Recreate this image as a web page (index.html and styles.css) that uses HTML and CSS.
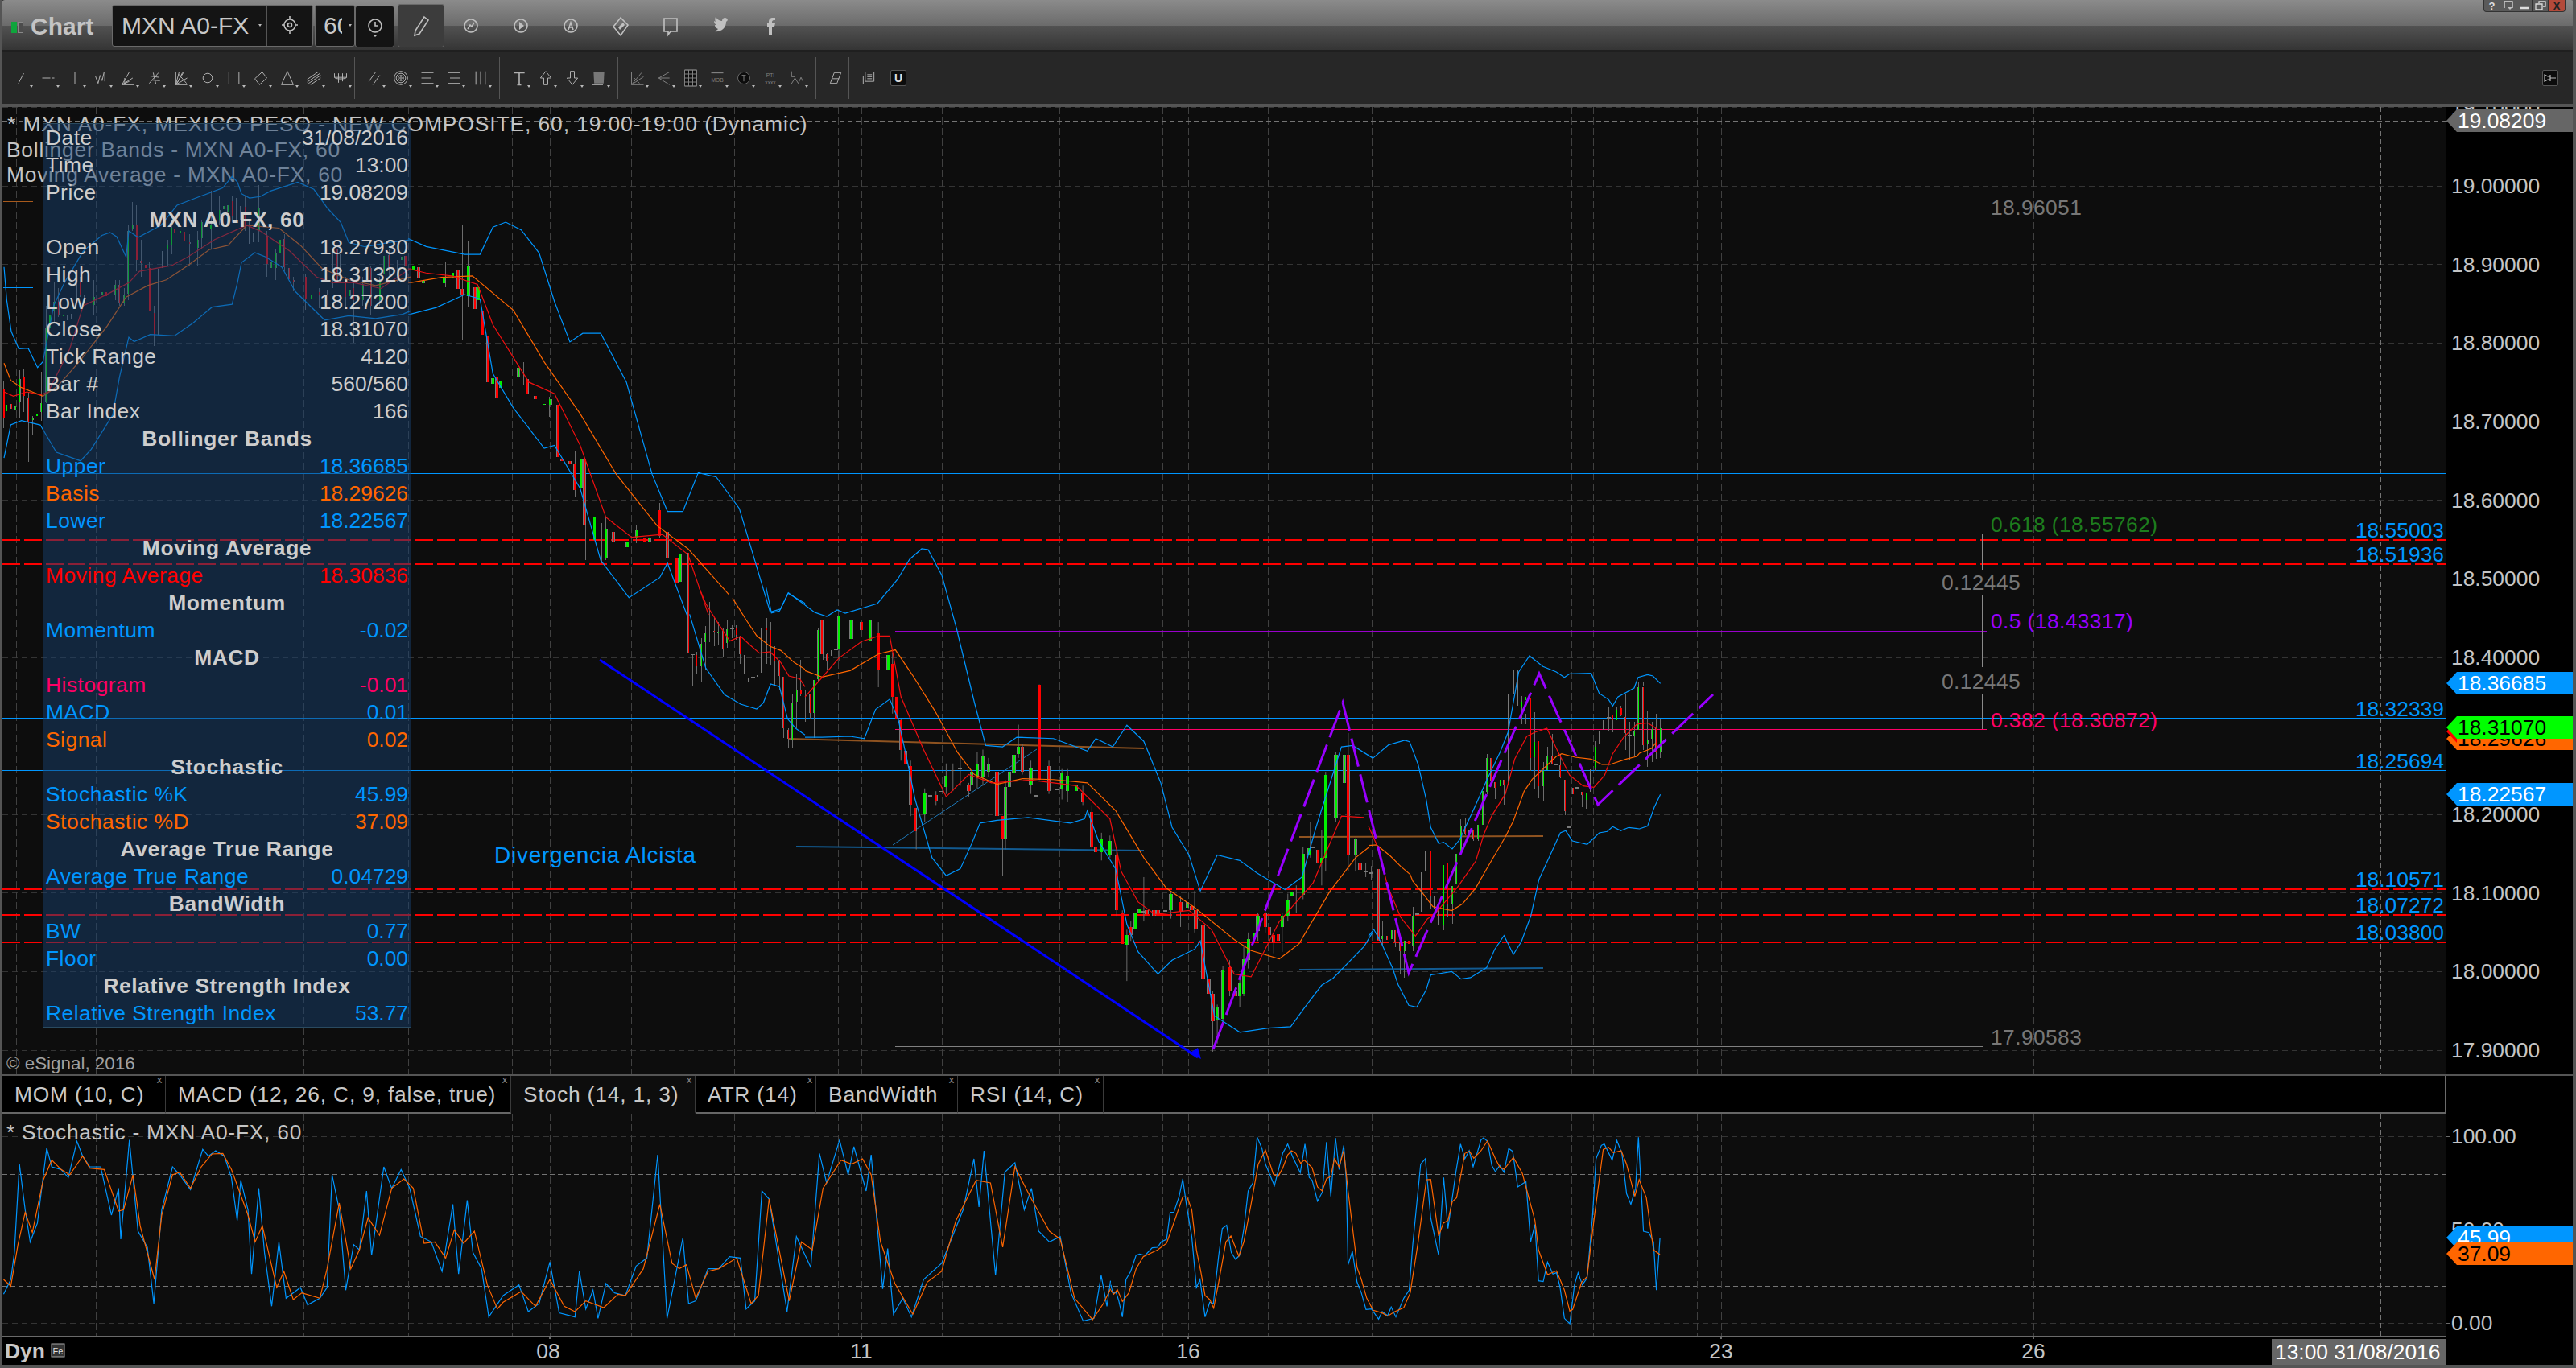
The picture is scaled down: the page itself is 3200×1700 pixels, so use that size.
FILE: index.html
```html
<!DOCTYPE html>
<html lang="en">
<head>
<meta charset="utf-8">
<title>Chart</title>
<link rel="stylesheet" href="styles.css">
</head>
<body>
<div class="window">
  <header class="titlebar">
    <span class="status"><i class="s-green"></i><i class="s-grey"></i></span>
    <span class="app-name">Chart</span>
    <div class="box sym-box"><span class="sym">MXN A0-FX</span><i class="caret caret-w"></i><span class="box-div"><svg class="ti" viewBox="0 0 24 28"><circle cx="12" cy="13" r="7"/><circle cx="12" cy="13" r="2.5"/><path d="M12 2v3M12 21v3M2 13h3M19 13h3"/></svg></span></div>
    <div class="box int-box"><span class="int">60</span><i class="caret caret-w"></i></div>
    <div class="box clock-box"><svg class="ti" viewBox="0 0 24 28"><circle cx="12" cy="13" r="8"/><path d="M12 8v5h4"/><path class="fill" d="M9 24h6l-3 3z"/></svg></div>
    <div class="box pen-box"><svg class="ti" viewBox="0 0 24 28"><path d="M16 3l5 4L10 24l-6 2 1-6z"/></svg></div>
    <span class="tb-icons">
      <svg class="ti" viewBox="0 0 24 28"><circle cx="12" cy="13" r="8"/><path d="M8 17l3-5 2 2 3-5"/></svg>
      <svg class="ti" viewBox="0 0 24 28"><circle cx="12" cy="13" r="8"/><path class="fill" d="M10 8l6 5-6 5z"/></svg>
      <svg class="ti" viewBox="0 0 24 28"><circle cx="12" cy="13" r="8"/><path d="M9 18l3-9 3 9M10 15h4"/></svg>
      <svg class="ti" viewBox="0 0 24 28"><path d="M12 3l9 9-9 13-9-11z"/><path class="fill" d="M9 15l6-6 2 3-6 6z"/></svg>
      <svg class="ti" viewBox="0 0 24 28"><path d="M4 4h16v16h-8l-3 4v-4H4z"/></svg>
      <svg class="ti" viewBox="0 0 24 28"><path class="fill" d="M21 6l-2 2c0 8-6 13-15 12 3-1 4-2 5-3-3-1-4-3-4-5l2 0c-2-1-3-3-3-5l2 1c-1-2-1-4 0-6 2 3 5 5 8 5 0-4 4-5 6-3z"/></svg>
      <svg class="ti" viewBox="0 0 24 28"><path class="fill" d="M14 24V14h3l1-4h-4V8c0-1 1-2 2-2h2V3h-3c-3 0-5 2-5 5v2H8v4h2v10z"/></svg>
    </span>
    <div class="win-controls">
      <span class="wbtn">?</span>
      <span class="wbtn"><svg class="wg" viewBox="0 0 16 12"><path d="M3 9V1h10v8"/><path class="fill" d="M7 8h6l-3 3z"/></svg></span>
      <span class="wbtn"><svg class="wg" viewBox="0 0 16 12"><path class="thick" d="M3 9h10"/></svg></span>
      <span class="wbtn"><svg class="wg" viewBox="0 0 16 12"><path d="M6 3V1h8v6h-3M2 4h8v7H2z"/></svg></span>
      <span class="wbtn wclose">X</span>
    </div>
  </header>

  <nav class="toolbar">
    <div class="tb-group tb-first">
      <span class="tb"><svg viewBox="0 0 24 24"><path d="M7 20L15 5"/></svg><i class="caret"></i></span>
      <span class="tb"><svg viewBox="0 0 24 24"><path d="M3 12h12M18 12h3"/></svg><i class="caret"></i></span>
      <span class="tb"><svg viewBox="0 0 24 24"><path d="M12 3v18"/></svg><i class="caret"></i></span>
      <span class="tb"><svg viewBox="0 0 24 24"><path d="M3 9l4 11 3-12 3 8 3-13M17 3v14"/></svg><i class="caret"></i></span>
      <span class="tb"><svg viewBox="0 0 24 24"><path d="M3 22L14 3M3 22l16-10M3 22h18M7 22V12M3 22l11-5"/></svg><i class="caret"></i></span>
      <span class="tb"><svg viewBox="0 0 24 24"><path d="M4 20L18 4M5 9l14 2M6 15l14 1M10 4l4 17"/></svg><i class="caret"></i></span>
      <span class="tb"><svg viewBox="0 0 24 24"><path d="M4 22L16 3M4 22L9 3M4 22l17-10M4 22h17M4 3v19M8 6l12 14M14 4L6 20"/></svg><i class="caret"></i></span>
      <span class="tb"><svg viewBox="0 0 24 24"><circle cx="12" cy="12" r="7"/></svg><i class="caret"></i></span>
      <span class="tb"><svg viewBox="0 0 24 24"><rect x="4" y="3" width="15" height="18"/></svg><i class="caret"></i></span>
      <span class="tb"><svg viewBox="0 0 24 24"><path d="M14 3l7 9-11 10-7-9z"/></svg><i class="caret"></i></span>
      <span class="tb"><svg viewBox="0 0 24 24"><path d="M12 2l9 20H3z"/></svg><i class="caret"></i></span>
      <span class="tb"><svg viewBox="0 0 24 24"><path d="M2 14L18 3M2 18L21 5M4 20L22 8M7 22L22 12"/></svg><i class="caret"></i></span>
      <span class="tb"><svg viewBox="0 0 24 24"><path d="M3 5v6c0 3 18 3 18 0V5M9 5v14M15 5v12M3 11h18"/></svg><i class="caret"></i></span>
    </div>
    <div class="tb-group">
      <span class="tb"><svg viewBox="0 0 24 24"><path d="M4 17L14 3M10 22L20 8"/></svg><i class="caret"></i></span>
      <span class="tb"><svg viewBox="0 0 24 24"><circle cx="12" cy="12" r="10"/><circle cx="12" cy="12" r="7"/><circle cx="12" cy="12" r="4"/><circle cx="12" cy="12" r="1.5"/></svg><i class="caret"></i></span>
      <span class="tb"><svg viewBox="0 0 24 24"><path d="M3 4h18M3 12h14M3 20h18"/></svg><i class="caret"></i></span>
      <span class="tb"><svg viewBox="0 0 24 24"><path d="M3 4h18M6 12h15M3 20h18"/></svg><i class="caret"></i></span>
      <span class="tb"><svg viewBox="0 0 24 24"><path d="M5 2v20M12 2v20M19 2v20"/></svg><i class="caret"></i></span>
    </div>
    <div class="tb-group">
      <span class="tb"><svg viewBox="0 0 24 24"><path class="thick" d="M4 4h16M12 4v18M9 22h6"/></svg><i class="caret"></i></span>
      <span class="tb"><svg viewBox="0 0 24 24"><path d="M12 2l8 10h-5v10H9V12H4z"/></svg><i class="caret"></i></span>
      <span class="tb"><svg viewBox="0 0 24 24"><path d="M12 22l8-10h-5V2H9v10H4z"/></svg><i class="caret"></i></span>
      <span class="tb"><svg viewBox="0 0 24 24"><path class="fill dim" d="M4 3h16l-1 17H5z"/><path d="M2 22h16"/></svg><i class="caret"></i></span>
    </div>
    <div class="tb-group dimmed">
      <span class="tb"><svg viewBox="0 0 24 24"><path d="M3 3v19h18M3 22L18 4M3 22l18-12M7 12l8 8"/></svg><i class="caret"></i></span>
      <span class="tb"><svg viewBox="0 0 24 24"><path d="M20 3L4 12l16 10M4 12h16"/></svg><i class="caret"></i></span>
      <span class="tb"><svg viewBox="0 0 24 24"><path class="fill blk" d="M3 0h18v24H3z"/><path d="M3 0h18v24H3zM9 0v24M15 0v24M3 6h18M3 12h18M3 18h18"/></svg><i class="caret"></i></span>
      <span class="tb"><svg viewBox="0 0 24 24"><path class="thick" d="M3 4h18"/><text class="mini" x="12" y="18">MOB</text></svg><i class="caret"></i></span>
      <span class="tb"><svg viewBox="0 0 24 24"><circle class="blk" cx="12" cy="12" r="9"/><path d="M9 8h6M12 8v9"/></svg><i class="caret"></i></span>
      <span class="tb"><svg viewBox="0 0 24 24"><text class="mini" x="12" y="11">PTI</text><text class="mini" x="12" y="22">xxxx</text></svg><i class="caret"></i></span>
      <span class="tb"><svg viewBox="0 0 24 24"><path d="M4 2v8h5M3 22l6-10 5 8 4-9 3 6"/></svg><i class="caret"></i></span>
    </div>
    <div class="tb-group tb-single">
      <span class="tb"><svg viewBox="0 0 24 24"><path d="M10 4h10l-6 16H4zM7 13h10"/></svg></span>
    </div>
    <span class="tb tb-notes"><svg viewBox="0 0 24 24"><path d="M7 3h13v14H7zM10 7h7M10 10h7M10 13h7M4 9v12h13"/></svg></span>
    <span class="u-btn">U</span>
    <span class="pin"><svg viewBox="0 0 18 18"><path d="M2 5l4 2h3V5v8-2H6l-4 2zM9 9h7"/></svg></span>
  </nav>

  <section class="pane">
    <svg class="plot" width="3193" height="1202" viewBox="3 133 3193 1202">
      <defs>
        <path id="g1" d="M25 1045V1068M58 1048V1065M74 955V1035M122 1090V1098M138 1075V1085M154 1040V1070M172 775V1035M186 730V775M202 685V720M236 730V738M268 728V748M284 610V690M350 670V698M382 652V662M430 628V665M463 665V690M478 440V658M494 420V435M592 572V800M607 510V570M625 490V505M640 428V488M672 440V448M737 470V498M752 410V465M786 420V430M818 368V400M835 352V365M850 350V372M898 352V400M965 362V440M946 445V480M1012 550V570M1028 518V570M1044 470V515M1160 660V675M1222 648V660M1238 500V640M1304 648V668M1352 625V680M1416 620V680M1432 528V592M1498 530V542"/>
        <path id="r1" d="M15 990V1090M43 1042V1060M90 950V1015M106 1020V1105M218 685V730M253 730V750M300 620V660M316 665V690M396 652V668M445 628V690M510 420V540M558 570V720M575 725V800M526 543V553M543 558V568M650 430V448M688 442V475M707 480V485M866 335V390M883 325V400M915 355V420M931 400V485M996 458V555M1060 468V565M1078 570V608M1094 610V620M1140 600V675M1190 652V665M1256 500V620M1270 520V620M1288 605V670M1318 640V680M1382 570V700M1450 525V565M1513 530V560"/>
        <path id="g2" d="M805 225V240M825 278V285M865 270V285M882 250V265M912 225V330M932 300V345M960 615V635M975 625V650M1010 580V610M1060 705V710M1072 690V710M1132 900V1000M1158 1100V1180M1180 1140V1240M1240 1145V1175M1222 1185V1205M1265 1175V1185M1325 1230V1325"/>
        <path id="r2" d="M790 190V225M815 230V270M892 242V305M900 305V325M925 300V375M940 380V465M950 470V630M968 610V685M1027 620V670M1043 678V690M1087 710V890M1095 900V905M1110 905V915M1120 915V1005M1138 900V1130M1195 1150V1185M1255 1175V1185M1285 1075V1165M1300 1150V1240M1318 1240V1330"/>
        <path id="g3" d="M94 210V295M109 172V205M157 167V172M190 157V208M271 337V352M304 328V334M319 154V319M433 430V568M449 385V427M514 346V468M529 160V343M580 233V256"/>
        <path id="r3" d="M46 -130V247M76 253V295M142 163V168M175 163V227M224 152V176M238 184V250M256 253V325M337 153V160M352 160V220M367 224V274M385 277V331M400 334V526M418 532V565M465 385V400M499 397V469M547 160V247M562 250V277"/>
        <path id="g4" d="M60 -40V75M82 -25V40M115 -30V50M147 100V155M212 595V675M250 535V575M295 520V570M305 490V540M315 465V540M325 495V520M355 575V760M362 520V575M370 460V525M378 430V455M400 505V565M455 525V580M465 535V590M480 570V590M525 760V810M540 770V820M570 1110V1145M585 1030V1090M592 1015V1030M648 960V1020M677 990V1010M730 1370V1415M740 1235V1410M770 1280V1330M777 1195V1320M785 1125V1200M795 1100V1125M802 1040V1095M845 1040V1080M855 980V1040M862 955V970M882 815V965M893 795V820M915 830V850M922 530V830M940 460V685M955 460V560M975 760V820"/>
        <path id="r4" d="M30 -30V95M100 -20V10M130 20V155M155 130V250M162 250V330M170 335V440M178 445V490M187 500V640M195 650V735M232 605V625M290 570V590M340 520V680M350 680V760M385 430V520M415 205V550M432 500V590M492 595V630M508 665V790M515 790V810M552 820V1020M562 1030V1140M577 1080V1110M605 1020V1035M618 1020V1040M625 1020V1035M665 990V1025M685 1005V1020M692 1020V1085M705 1075V1270M715 1270V1320M722 1320V1420M752 1225V1310M762 1310V1330M815 1030V1080M822 1080V1110M830 1110V1135M838 1105V1130M908 800V850M962 460V820M983 850V875M1015 870V1130"/>
        <path id="g5" d="M52 1150V1160M86 1127V1160M134 1168V1207M166 1075V1185M199 912V1060M214 832V910M280 885V1110M313 962V1032M328 842V955M344 742V840M376 755V765M409 735V787M425 610V735M442 485V612M491 568V590M523 248V585M539 160V245M571 275V295M586 257V270M619 425V483M652 533V590M667 477V530M813 617V642M829 527V612M845 443V522M862 386V436M877 344V382M925 305V345M991 386V402M1006 221V382M1040 416V436M1057 377V415M1088 375V463"/>
        <path id="r5" d="M37 900V1165M70 1148V1165M100 1127V1170M118 1173V1207M150 1168V1180M232 835V1000M247 1003V1048M262 1050V1108M295 880V1030M361 740V772M391 753V787M457 485V573M472 575V597M505 567V585M554 160V290M604 260V485M634 422V592M685 477V510M715 512V557M733 566V685M763 598V622M796 611V625M910 328V345M942 299V327M958 333V393M1024 221V438M1072 375V463"/>
      </defs>

      <rect class="plot-bg" x="3" y="133" width="3035" height="1202"/>
      <path class="grid-h" d="M3 133H3038M3 231H3042M3 328.6H3042M3 426H3042M3 524H3042M3 621.6H3042M3 719H3042M3 817H3042M3 914H3042M3 1012H3042M3 1109.6H3042M3 1207H3042M3 1305H3042"/>
      <path class="grid-v" d="M20 133V1335M119 133V1335M248 133V1335M377 133V1335M507 133V1335M636 133V1335M683 133V1335M784 133V1335M912 133V1335M1041 133V1335M1070 133V1335M1170 133V1335M1316 133V1335M1444 133V1335M1476 133V1335M1575 133V1335M1704 133V1335M1833 133V1335M1952 133V1335M1979 133V1335M2108 133V1335M2138 133V1335M2526 133V1335"/>
      <path class="cross" d="M3 150.7H3038M2957 133V1335"/>

      <path class="hl-blue" d="M3 588H3038M3 892H3038M3 957H3038"/>
      <path class="hl-red" d="M3 671H3038M3 701H3038M3 1105H3038M3 1137H3038M3 1171H3038"/>

      <text class="lbl lbl-wide" x="9" y="163">* MXN A0-FX, MEXICO PESO - NEW COMPOSITE, 60, 19:00-19:00 (Dynamic)</text>
      <text class="lbl" x="8" y="195">Bollinger Bands - MXN A0-FX, 60</text>
      <text class="lbl" x="8" y="226">Moving Average - MXN A0-FX, 60</text>
      <text class="copy" x="8" y="1329">© eSignal, 2016</text>
      <path class="mark-o" d="M4 250H41"/>
      <path class="mark-b" d="M4 357H41"/>

      <path class="fib grey" d="M1112 268H2463M1112 1300H2463"/>
      <path class="fib green" d="M1112 663H2468"/>
      <path class="fib purple" d="M1112 784H2468"/>
      <path class="fib pink" d="M1112 906H2468"/>
      <path class="fib grey1" d="M2462 663V708M2462 740V829M2462 862V906"/>

      <path class="tr-or" d="M980 918L1421 930M1614 1040L1917 1039"/>
      <path class="tr-bl" d="M989 1052L1421 1057M1614 1205L1917 1203"/>
      <path class="tr-thin" d="M1109 1050L1288 931"/>

      <g class="nss" transform="translate(0 130) scale(.3333 .357)">
        <path class="wick" d="M15 960V1125M74 925V1090M90 920V1070M106 1000V1245M122 1085V1150M154 930V1100M172 700V1040M202 620V760M218 640V740M284 580V720M300 600V670M350 610V730M430 610V680M445 610V700M463 640V700M478 420V680M494 340V440M510 350V580M526 470V600M558 550V720M575 700V840M592 550V850M607 470V590M625 470V560M640 400V520M672 420V490M707 450V560M737 440V560M752 400V500M788 300V500M818 320V420M866 320V410M883 320V420M915 320V440M946 420V550M965 280V480M996 440V600M1028 500V610M1060 450V580M1094 600V650M1140 590V715M1190 640V710M1238 480V660M1288 600V710M1320 620V830M1352 600V700M1382 560V730M1416 600V700M1450 500V600M1480 540V620"/>
        <use href="#g1" class="ol"/><use href="#r1" class="ol"/><use href="#g1" class="gr"/><use href="#r1" class="rd"/>
        <polyline class="bb" points="15,565 25,680 42,790 70,850 105,848 140,915 160,895 200,700 240,620 310,510 380,455 410,445 435,460 470,530 480,440 515,462 560,440 600,420 660,350 750,318 830,290 865,250 885,270 900,310 930,325 970,320 1010,300 1110,270 1170,295 1220,360 1270,410 1300,480 1360,495 1450,480 1530,470"/>
        <polyline class="bb" points="15,1230 40,1115 80,1100 150,1115 210,1210 300,1240 340,1200 420,1080 445,950 480,810 500,825 560,800 650,805 720,760 790,705 865,695 885,620 900,550 950,515 990,530 1050,565 1100,650 1210,750 1300,735 1400,745 1500,730 1530,718"/>
        <polyline class="basis" points="15,900 40,960 80,985 120,1000 160,1015 215,980 300,890 400,770 470,670 550,630 620,610 700,560 780,505 850,490 920,420 1040,430 1120,490 1200,570 1300,610 1400,630 1530,600"/>
        <polyline class="ma" points="15,1000 50,1015 100,1000 150,1010 180,1000 260,850 310,700 400,660 480,620 520,580 640,560 700,530 800,470 920,420 970,440 1080,510 1180,600 1240,620 1320,620 1420,640 1530,570"/>
      </g>
      <g class="nss" transform="translate(0 250) scale(.6378 .357)">
        <path class="wick" d="M900 85V485M912 140V370M868 210V300M960 565V640M968 600V710M1020 560V640M1050 650V750M1070 680V750M1130 860V1010M1120 870V1030M1140 1000V1250M1172 1120V1260M1180 1100V1250M1210 1150V1240M1240 1130V1190M1285 1050V1170M1330 1130V1345"/>
        <use href="#g2" class="ol"/><use href="#r2" class="ol"/><use href="#g2" class="gr"/><use href="#r2" class="rd"/>
        <polyline class="bb" points="795,130 830,158 905,185 935,185 960,90 985,73 1015,100 1050,180 1080,350 1110,490 1135,460 1170,460 1220,630 1270,950 1300,1080 1330,1080 1360,945 1395,960 1440,1070 1500,1430 1520,1420 1535,1365 1568,1400"/>
        <polyline class="bb" points="795,395 850,370 905,325 935,340 960,600 1000,720 1060,860 1080,850 1130,1000 1170,1250 1225,1380 1285,1310 1300,1260 1340,1450"/>
        <polyline class="basis" points="795,285 860,265 920,260 1000,380 1060,560 1130,740 1200,950 1280,1130 1340,1210 1420,1370"/>
        <polyline class="ma" points="795,235 830,250 880,260 930,290 960,430 1030,630 1080,670 1130,850 1180,1100 1230,1170 1290,1160 1340,1230 1380,1440"/>
      </g>
      <g class="nss" transform="translate(840 730) scale(.3333)">
        <path class="wick" d="M62 250V365M76 240V325M94 190V350M109 145V310M126 55V205M142 115V220M157 130V215M175 150V260M190 120V225M208 140V190M224 140V195M238 180V285M256 250V355M271 295V370M286 325V385M304 310V395M319 115V338M337 115V285M352 130V290M367 220V365M385 270V385M400 334V560M418 525V600M433 400V600M449 325V525M465 270V405M481 385V500M499 397V490M514 346V560M529 150V350M547 155V270M562 245V310M580 210V290M596 210V300"/>
        <use href="#g3" class="ol"/><use href="#r3" class="ol"/><use href="#g3" class="gr"/><use href="#r3" class="rd"/>
        <path class="doji" d="M62 248V252M126 165V169M208 153V157M286 333V337M481 396V400M596 231V235"/>
        <polyline class="bb" points="50,100 110,300 180,400 240,435 300,453 325,430 352,360 385,370 415,490 445,525 480,550"/>
        <polyline class="bb" points="335,0 355,95 385,88 418,20 480,65"/>
        <polyline class="basis" points="210,40 260,120 300,180 350,220 390,235 440,280 480,305"/>
        <polyline class="ma" points="85,0 110,60 160,140 200,200 240,182 270,210 310,245 350,240 390,280 420,330 460,340 480,370"/>
      </g>
      <polyline class="bb" points="1000,752 1012,761 1027,766 1040,758 1050,762 1090,750 1115,720 1130,695 1145,682 1153,683 1170,715 1188,780"/>
      <g class="nss" transform="translate(1000 780) scale(.7015 .3444)">
        <path class="wick" d="M60 -40V120M130 -20V215M155 90V310M170 330V480M187 480V680M197 650V800M212 580V700M232 590V640M250 490V600M262 490V590M275 460V570M290 560V610M305 450V580M315 440V570M325 470V540M340 500V880M350 680V895M355 550V800M378 350V470M385 420V530M400 480V600M415 205V550M432 480V600M455 510V620M465 510V630M492 570V640M508 640V800M525 740V840M540 750V830M552 800V1040M562 1020V1140M570 1090V1275M577 1060V1130M600 900V1060M618 1010V1070M648 950V1050M665 970V1080M690 950V1100M705 1070V1280M722 1310V1530M730 1360V1500M740 1220V1430M752 1200V1330M770 1270V1370M777 1150V1330M785 1100V1230M802 1030V1130M815 1020V1100M830 1100V1175M845 1030V1170M855 960V1060M870 930V1030M882 790V980M895 700V830M915 730V930M922 520V880M940 450V700M962 380V880M975 760V880M993 850V900M1003 860V910"/>
        <use href="#g4" class="ol"/><use href="#r4" class="ol"/><use href="#g4" class="gr"/><use href="#r4" class="rd"/>
        <path class="doji" d="M222 605V612M240 588V592M262 513V517M275 508V512M445 583V587M408 604V609M600 1022V1028M638 1020V1025M870 938V942M900 793V797M993 876V882M1003 883V888"/>
        <polyline class="bb" points="268,0 300,270 320,425 350,430 375,395 440,400 500,445 515,400 545,430 570,352 600,410 630,560 650,720 680,820 700,950 730,820 770,840 800,885 850,945 880,900 905,720 950,430 970,425 1005,470"/>
        <polyline class="bb" points="0,395 30,395 80,392 105,400 125,295 150,258 165,330 180,470 195,620 225,830 250,895 275,870 295,780 310,705 340,695 395,685 470,705 495,690 500,660 520,770 550,870 570,1070 590,1170 625,1250 650,1200 690,1160 700,1130 725,1400 770,1460 820,1445 860,1440 885,1370 915,1290 935,1265 990,1150 1005,1100"/>
        <polyline class="basis" points="0,155 30,178 80,155 130,95 160,80 190,170 230,300 270,450 300,530 340,565 385,545 440,548 500,560 550,660 600,830 640,940 690,1010 760,1125 790,1165 840,1195 875,1140 930,950 975,830 1000,790"/>
        <polyline class="ma" points="0,250 30,180 60,110 100,50 130,30 150,30 170,250 210,440 250,610 290,530 330,560 400,550 480,570 540,690 560,880 590,990 620,1035 680,1020 720,1090 760,1250 790,1260 840,1060 900,920 950,680 990,685"/>
      </g>
      <g class="nss" transform="translate(1700 780) scale(.3333)">
        <path class="wick" d="M539 90V160M523 190V250M554 290V325M571 255V360M586 320V360M604 480V535M619 315V600M634 590V635M652 500V645M667 445V530M685 395V510M715 470V560M733 685V698M796 620V670M813 640V675M845 422V535M862 370V458M877 380V425M895 295V385M910 345V390M925 295V345M942 290V330M958 250V455M975 350V495M991 350V480M1006 200V225M1024 200V220M1024 438V455M1040 310V520M1057 350V500M1072 320V490M1088 340V487M215 765V835M232 1000V1050M262 1108V1178M280 1110V1128M295 1030V1080M313 1032V1105M166 1040V1205M134 1207V1305M118 1207V1290M100 1170V1190M52 1095V1185M199 1060V1100M344 715V740M361 710V775M391 785V795M409 785V795M472 597V640M505 585V660M523 585V610M442 470V620"/>
        <use href="#g5" class="ol"/><use href="#r5" class="ol"/><use href="#g5" class="gr"/><use href="#r5" class="rd"/>
        <path class="doji" d="M181 1063V1070M700 508V512M750 742V747M780 594V599M895 334V338M975 398V403"/>
        <polyline class="bb" points="15,488 75,437 135,420 153,425 185,510 215,640 232,745 262,805 280,800 312,825 340,790 400,660 440,570 490,465 520,390 560,165 600,105 650,145 700,165 730,185 750,172 830,170 860,245 895,268 910,292 930,258 990,225 1005,185 1040,175 1060,180 1088,208"/>
        <polyline class="bb" points="0,1150 20,1125 50,1180 90,1270 110,1330 150,1408 180,1415 215,1350 232,1295 310,1282 345,1310 380,1305 440,1268 470,1200 505,1148 540,1218 570,1170 605,1075 635,940 690,820 715,765 735,757 760,795 815,808 860,765 890,760 910,742 940,757 970,745 1010,750 1040,740 1065,670 1088,622"/>
        <polyline class="basis" points="0,812 30,810 80,850 120,890 155,920 165,945 210,1000 240,1040 310,1055 350,1030 400,970 440,900 510,780 540,720 580,610 610,565 700,480 720,470 770,483 830,490 870,510 900,510 960,490 1000,480 1010,468 1055,450 1070,430"/>
        <polyline class="ma" points="0,740 40,830 70,960 120,1080 175,1150 220,1085 245,1070 330,970 400,870 430,770 460,700 510,620 545,490 590,405 620,390 665,375 700,450 750,550 800,590 840,595 880,550 910,470 950,410 1000,360 1040,355 1072,375"/>
      </g>

      <path class="trend" d="M745 820L1488 1314"/>
      <polygon class="arrow" points="1477,1309 1492,1316 1488,1302"/>
      <polyline class="zig" points="1507,1304 1668,873 1750,1209 1912,837 1985,1000 2128,863"/>

      <text class="lv" x="3036" y="668">18.55003</text>
      <text class="lv" x="3036" y="698">18.51936</text>
      <text class="lv" x="3036" y="890">18.32339</text>
      <text class="lv" x="3036" y="955">18.25694</text>
      <text class="lv" x="3036" y="1102">18.10571</text>
      <text class="lv" x="3036" y="1134">18.07272</text>
      <text class="lv" x="3036" y="1168">18.03800</text>

      <text class="fl c-grey" x="2473" y="267">18.96051</text>
      <text class="fl c-grey" x="2473" y="1298">17.90583</text>
      <text class="fl c-green" x="2473" y="661">0.618 (18.55762)</text>
      <text class="fl c-purple" x="2473" y="781">0.5 (18.43317)</text>
      <text class="fl c-pink" x="2473" y="904">0.382 (18.30872)</text>
      <text class="fl c-grey mid" x="2461" y="733">0.12445</text>
      <text class="fl c-grey mid" x="2461" y="856">0.12445</text>
      <text class="note" x="614" y="1072">Divergencia Alcista</text>

      <rect class="axis-bg" x="3038" y="133" width="158" height="1202"/>
      <path class="axis-line" d="M3038 133V1335"/>
      <path class="cross" d="M3038 150.7H3046"/>
      <text class="ax" x="3045" y="142">19.10000</text>
      <text class="ax" x="3045" y="240">19.00000</text>
      <text class="ax" x="3045" y="338">18.90000</text>
      <text class="ax" x="3045" y="435">18.80000</text>
      <text class="ax" x="3045" y="533">18.70000</text>
      <text class="ax" x="3045" y="631">18.60000</text>
      <text class="ax" x="3045" y="728">18.50000</text>
      <text class="ax" x="3045" y="826">18.40000</text>
      <text class="ax" x="3045" y="923">18.30000</text>
      <text class="ax" x="3045" y="1021">18.20000</text>
      <text class="ax" x="3045" y="1119">18.10000</text>
      <text class="ax" x="3045" y="1216">18.00000</text>
      <text class="ax" x="3045" y="1314">17.90000</text>

      <polygon class="tag-grey" points="3039,150 3052,136 3196,136 3196,164 3052,164"/>
      <text class="tagt t-w" x="3053" y="159">19.08209</text>
      <polygon class="tag-blue" points="3039,849 3052,835 3196,835 3196,863 3052,863"/>
      <text class="tagt t-w" x="3053" y="858">18.36685</text>
      <polygon class="tag-orange" points="3039,918 3052,904 3196,904 3196,932 3052,932"/>
      <text class="tagt t-k" x="3053" y="927">18.29626</text>
      <polygon class="tag-red" points="3039,909 3052,895 3052,923"/>
      <polygon class="tag-green" points="3039,904 3052,890 3196,890 3196,918 3052,918"/>
      <text class="tagt t-k" x="3053" y="913">18.31070</text>
      <polygon class="tag-blue" points="3039,987 3052,973 3196,973 3196,1001 3052,1001"/>
      <text class="tagt t-w" x="3053" y="996">18.22567</text>
    </svg>

    <aside class="cursor">
      <div class="row"><span>Date</span><span>31/08/2016</span></div>
      <div class="row"><span>Time</span><span>13:00</span></div>
      <div class="row"><span>Price</span><span>19.08209</span></div>
      <div class="row hdr">MXN A0-FX, 60</div>
      <div class="row"><span>Open</span><span>18.27930</span></div>
      <div class="row"><span>High</span><span>18.31320</span></div>
      <div class="row"><span>Low</span><span>18.27200</span></div>
      <div class="row"><span>Close</span><span>18.31070</span></div>
      <div class="row"><span>Tick Range</span><span>4120</span></div>
      <div class="row"><span>Bar #</span><span>560/560</span></div>
      <div class="row"><span>Bar Index</span><span>166</span></div>
      <div class="row hdr">Bollinger Bands</div>
      <div class="row c-b"><span>Upper</span><span>18.36685</span></div>
      <div class="row c-o"><span>Basis</span><span>18.29626</span></div>
      <div class="row c-b"><span>Lower</span><span>18.22567</span></div>
      <div class="row hdr">Moving Average</div>
      <div class="row c-r"><span>Moving Average</span><span>18.30836</span></div>
      <div class="row hdr">Momentum</div>
      <div class="row c-b"><span>Momentum</span><span>-0.02</span></div>
      <div class="row hdr">MACD</div>
      <div class="row c-p"><span>Histogram</span><span>-0.01</span></div>
      <div class="row c-b"><span>MACD</span><span>0.01</span></div>
      <div class="row c-o"><span>Signal</span><span>0.02</span></div>
      <div class="row hdr">Stochastic</div>
      <div class="row c-b"><span>Stochastic %K</span><span>45.99</span></div>
      <div class="row c-o"><span>Stochastic %D</span><span>37.09</span></div>
      <div class="row hdr">Average True Range</div>
      <div class="row c-b"><span>Average True Range</span><span>0.04729</span></div>
      <div class="row hdr">BandWidth</div>
      <div class="row c-b"><span>BW</span><span>0.77</span></div>
      <div class="row c-b"><span>Floor</span><span>0.00</span></div>
      <div class="row hdr">Relative Strength Index</div>
      <div class="row c-b"><span>Relative Strength Index</span><span>53.77</span></div>
    </aside>
  </section>

  <div class="tabs">
    <span class="tab">MOM (10, C)<i class="tab-x">x</i></span>
    <span class="tab">MACD (12, 26, C, 9, false, true)<i class="tab-x">x</i></span>
    <span class="tab active">Stoch (14, 1, 3)<i class="tab-x">x</i></span>
    <span class="tab">ATR (14)<i class="tab-x">x</i></span>
    <span class="tab">BandWidth<i class="tab-x">x</i></span>
    <span class="tab">RSI (14, C)<i class="tab-x">x</i></span>
    <span class="tab-fill"></span>
  </div>

  <svg class="plot" width="3193" height="276" viewBox="3 1384 3193 276">
    <rect class="plot-bg" x="3" y="1384" width="3035" height="276"/>
    <path class="grid-h" d="M3 1412H3044M3 1528H3044M3 1644H3044"/>
    <path class="cross" d="M3 1459.6H3038M3 1598H3038"/>
    <path class="grid-v" d="M119 1384V1660M248 1384V1660M377 1384V1660M507 1384V1660M636 1384V1660M683 1384V1660M784 1384V1660M912 1384V1660M1041 1384V1660M1070 1384V1660M1170 1384V1660M1316 1384V1660M1444 1384V1660M1476 1384V1660M1575 1384V1660M1704 1384V1660M1833 1384V1660M1952 1384V1660M1979 1384V1660M2108 1384V1660M2138 1384V1660M2526 1384V1660"/>
    <path class="cross" d="M2957 1384V1660"/>
    <g class="nss" transform="translate(0 1290) scale(.8929 .3333)">
      <polyline class="bb" points="5,955 15,900 20,800 27,470 35,640 42,760 52,690 65,410 72,480 85,490 95,520 107,385 115,440 125,480 140,480 150,600 155,660 165,560 168,750 180,380 192,720 205,780 214,990 225,640 240,480 250,510 265,565 282,415 290,440 300,420 312,440 322,520 330,680 335,530 345,640 350,880 360,560 368,800 378,1000 388,760 398,970 418,930 428,995 445,970 455,930 462,510 472,640 481,940 492,770 500,790 510,570 517,810 534,480 545,560 558,490 570,560 585,740 600,760 615,870 630,620 638,880 650,605 658,800 670,860 680,1040 700,960 722,920 735,1020 750,990 765,835 778,1025 800,1040 806,870 815,1010 825,940 832,1045 843,915 855,950 870,960 885,850 900,820 915,435 928,1045 950,745 958,990 968,980 985,860 1000,860 1015,815 1030,820 1038,1010 1050,980 1060,570 1070,600 1095,1020 1108,740 1128,855 1140,430 1150,540 1168,380 1180,510 1188,405 1205,570 1212,435 1228,935 1235,785 1243,1030 1256,970 1268,1040 1285,900 1310,840 1340,640 1355,450 1362,630 1369,420 1385,885 1398,500 1412,465 1425,640 1435,560 1445,720 1460,760 1475,740 1490,950 1507,1055 1522,1045 1532,885 1540,1000 1545,905"/>
      <polyline class="basis" points="5,900 15,925 25,770 35,650 45,725 60,530 72,455 85,490 97,510 115,440 125,485 145,490 165,645 172,640 185,510 195,700 215,900 225,660 240,510 250,500 265,560 280,480 295,432 310,430 322,490 345,660 355,760 365,700 385,930 395,870 408,975 420,950 445,970 455,860 472,615 488,860 500,790 512,670 528,735 545,560 562,525 575,560 590,765 605,760 620,820 632,715 645,765 660,720 678,920 692,1010 700,985 725,945 745,1000 765,900 785,1000 800,1020 815,980 840,1005 860,955 870,960 895,860 918,620 935,840 945,860 955,845 968,970 985,870 1000,860 1025,820 1045,990 1055,960 1070,600 1098,980 1115,760 1130,790 1145,560 1170,455 1185,470 1200,450 1212,510 1225,760 1245,915 1270,1030 1290,910 1310,870 1330,680 1358,530 1378,540 1395,780 1412,480 1435,600 1460,720 1475,750 1495,970 1520,1050 1535,990 1545,935"/>
    </g>
    <g class="nss" transform="translate(1380 1380) scale(.4464 .3333)">
      <polyline class="bb" points="0,650 5,680 15,680 22,710 32,770 42,630 55,600 70,540 80,535 95,540 115,512 130,510 140,490 155,480 165,380 175,380 190,320 200,255 210,350 225,470 238,660 248,630 262,770 275,715 285,720 300,540 310,440 322,428 335,530 347,555 358,540 370,440 382,300 395,270 407,100 420,140 430,200 455,280 478,160 492,125 505,170 527,232 540,125 552,250 560,260 575,338 588,305 600,118 612,320 625,102 635,220 648,130 655,260 660,575 672,525 685,640 697,680 710,742 725,740 745,778 755,750 770,765 780,733 793,770 815,700 830,670 840,500 862,200 875,180 890,400 912,540 926,250 938,440 960,230 973,125 985,180 997,150 1008,210 1030,110 1037,102 1048,115 1060,205 1070,228 1082,205 1094,230 1107,142 1118,152 1132,285 1155,265 1168,490 1180,425 1190,635 1203,638 1215,565 1230,610 1240,605 1250,660 1262,775 1277,795 1290,650 1300,605 1312,650 1325,625 1340,400 1350,180 1365,130 1373,125 1395,185 1408,112 1422,160 1435,310 1447,350 1460,290 1468,100 1482,450 1497,455 1510,490 1518,670 1528,475"/>
      <polyline class="basis" points="0,670 8,685 18,668 32,712 50,680 70,590 90,545 130,520 155,495 180,400 200,322 212,322 225,370 238,520 250,600 262,690 275,705 286,737 300,640 320,490 334,468 356,543 370,490 390,350 410,200 430,147 452,237 465,247 478,215 492,165 503,150 515,160 528,197 538,185 560,213 575,285 588,300 600,255 612,245 622,180 635,210 648,150 660,300 680,520 685,585 697,630 712,700 730,745 755,755 770,767 790,750 815,735 833,680 855,490 878,258 890,257 912,468 925,420 938,410 950,340 962,325 985,160 998,152 1010,178 1030,150 1048,113 1070,180 1082,210 1094,220 1120,175 1145,235 1180,410 1190,520 1215,612 1240,598 1262,670 1277,748 1285,742 1310,640 1325,620 1345,400 1370,145 1385,137 1398,157 1420,150 1435,200 1458,320 1470,258 1490,325 1510,520 1528,537"/>
    </g>
    <text class="lbl" x="8" y="1416">* Stochastic - MXN A0-FX, 60</text>
    <rect class="axis-bg" x="3038" y="1384" width="158" height="276"/>
    <path class="axis-line" d="M3038 1384V1660"/>
    <path class="axis-line" d="M3038 1412H3044M3038 1528H3044M3038 1644H3044"/>
    <text class="ax" x="3045" y="1421">100.00</text>
    <text class="ax" x="3045" y="1537">50.00</text>
    <text class="ax" x="3045" y="1653">0.00</text>
    <polygon class="tag-blue" points="3039,1538 3052,1524 3196,1524 3196,1552 3052,1552"/>
    <text class="tagt t-w" x="3053" y="1547">45.99</text>
    <polygon class="tag-orange" points="3039,1558 3052,1544 3196,1544 3196,1572 3052,1572"/>
    <text class="tagt t-k" x="3053" y="1567">37.09</text>
  </svg>

  <svg class="plot" width="3193" height="36" viewBox="3 1660 3193 36">
    <path class="axis-rule" d="M3 1660H3038M683 1660V1664M1070 1660V1664M1476 1660V1664M2138 1660V1664M2526 1660V1664"/>
    <text class="dyn" x="6" y="1688">Dyn</text>
    <rect class="dyn-box" x="64" y="1670" width="16" height="16"/>
    <text class="dyn-fe" x="72" y="1683">Fe</text>
    <text class="ax mid" x="681" y="1688">08</text>
    <text class="ax mid" x="1070" y="1688">11</text>
    <text class="ax mid" x="1476" y="1688">16</text>
    <text class="ax mid" x="2138" y="1688">23</text>
    <text class="ax mid" x="2526" y="1688">26</text>
    <rect class="date-box" x="2822" y="1664" width="216" height="32"/>
    <text class="tagt t-w" x="2826" y="1689">13:00 31/08/2016</text>
  </svg>
</div>
</body>
</html>
```

FILE: styles.css
```css
* { box-sizing: border-box; }
html, body { margin: 0; padding: 0; background: #000; }
body { font-family: "Liberation Sans", Arial, sans-serif; color: #c8c8c8; }
i { font-style: normal; }

.window { width: 3200px; height: 1700px; overflow: hidden; background: #000; border-left: 3px solid #555; border-right: 4px solid #555; border-bottom: 4px solid #555; }

/* title bar */
.titlebar { height: 65px; margin: 0 -4px 0 -3px; padding-left: 14px; display: flex; align-items: center; background: linear-gradient(#8b8b8b 0, #6b6b6b 32px, #525252 32px, #353535 62px, #1f1f1f 62px, #1f1f1f 65px); border-radius: 6px 6px 0 0; }
.status { display: flex; gap: 1px; width: 16px; height: 14px; margin-top: 2px; }
.status i { width: 7px; height: 14px; }
.s-green { background: #0fa53c; }
.s-grey { background: #4c4c4c; border: 1px solid #888; }
.app-name { width: 109px; padding-left: 8px; font-size: 30px; font-weight: 700; color: #c4c4c4; }
.box { height: 52px; margin-top: -2px; background: #141414; border: 1px solid #6a6a6a; border-radius: 3px; display: flex; align-items: center; position: relative; }
.sym-box { width: 250px; padding-left: 11px; }
.sym { font-size: 30px; width: 170px; color: #c8c8c8; white-space: nowrap; }
.caret { display: block; width: 0; height: 0; border-left: 2.5px solid transparent; border-right: 2.5px solid transparent; border-top: 3px solid #bbb; }
.caret-w { margin-top: 0; }
.box-div { margin-left: 6px; height: 100%; flex: 1; border-left: 1px solid #555; display: flex; align-items: center; justify-content: center; }
.int-box { width: 50px; margin-left: 2px; padding-left: 10px; }
.int { width: 23px; overflow: hidden; font-size: 30px; white-space: nowrap; }
.int-box .caret { margin-left: 8px; }
.clock-box { width: 49px; height: 52px; margin-top: 0; justify-content: center; }
.pen-box { width: 58px; height: 54px; margin-left: 4px; background: #3c3c3c; justify-content: center; }
.ti { width: 24px; height: 28px; flex: none; fill: none; stroke: #c0c0c0; stroke-width: 1.6; }
.ti .fill, .wg .fill { fill: #c0c0c0; stroke: none; }
.tb-icons { display: flex; margin-left: 21px; gap: 38px; }
.win-controls { margin-left: auto; margin-right: 13px; align-self: flex-start; display: flex; height: 15px; background: #5a5a5a; border: 1px solid #333; border-top: 0; border-radius: 0 0 4px 4px; overflow: hidden; }
.wbtn { width: 20px; height: 14px; border-right: 1px solid #333; display: flex; align-items: center; justify-content: center; font-size: 13px; font-weight: 700; color: #ddd; }
.wclose { background: #b34a3a; border-right: 0; color: #222; }
.wg { width: 16px; height: 12px; fill: none; stroke: #ddd; stroke-width: 1.3; }
.wg .thick { stroke-width: 2.4; }

/* drawing toolbar */
.toolbar { height: 68px; margin-right: -4px; padding-left: 7px; display: flex; align-items: center; background: #272727; border-bottom: 4px solid #555; }
.tb-group { display: flex; height: 52px; align-items: center; padding: 0 7px; border-right: 1px solid #555; }
.tb-first { padding: 0 1px 0 0; }
.tb-single { padding-right: 0; }
.tb { width: 33px; height: 30px; display: flex; align-items: center; justify-content: center; position: relative; flex: none; }
.tb svg { width: 20px; height: 22px; fill: none; stroke: #b0b0b0; stroke-width: 1.2; overflow: visible; }
.tb .caret { position: absolute; right: 2px; bottom: 3px; }
.tb .fill { fill: #b0b0b0; stroke: none; }
.tb .fill.dim { fill: #777; }
.tb .blk { fill: #0c0c0c; stroke: #666; }
.tb .thick { stroke-width: 2; }
.dimmed svg { stroke: #808080; }
.mini { font-size: 8px; fill: #808080; stroke: none; text-anchor: middle; }
.tb-notes { margin-left: 7px; }
.u-btn { width: 20px; height: 20px; margin-left: 11px; background: #0c0c0c; border: 1px solid #555; border-radius: 2px; color: #ddd; font-size: 14px; font-weight: 700; text-align: center; line-height: 18px; }
.pin { margin-left: auto; margin-right: 22px; width: 20px; height: 20px; background: #0c0c0c; border: 1px solid #555; border-radius: 2px; }
.pin svg { display: block; width: 18px; height: 18px; fill: none; stroke: #bbb; stroke-width: 1.2; }

/* plots */
.pane { position: relative; height: 1202px; }
.plot { display: block; overflow: hidden; }
.plot text { font-family: "Liberation Sans", Arial, sans-serif; }
.plot-bg { fill: #0d0d0d; }
.axis-bg { fill: #000; }
.axis-line { stroke: #6a6a6a; stroke-width: 1; fill: none; shape-rendering: crispEdges; }
.axis-rule { stroke: #6a6a6a; stroke-width: 2; fill: none; shape-rendering: crispEdges; }
.grid-h { fill: none; stroke: #343434; stroke-width: 1; stroke-dasharray: 7 5; shape-rendering: crispEdges; }
.grid-v { fill: none; stroke: #404040; stroke-width: 1; stroke-dasharray: 9 4; shape-rendering: crispEdges; }
.cross { fill: none; stroke: #747474; stroke-width: 1; stroke-dasharray: 6 4; shape-rendering: crispEdges; }
.hl-blue { fill: none; stroke: #0096ff; stroke-width: 1; shape-rendering: crispEdges; }
.hl-red { fill: none; stroke: #ff0000; stroke-width: 2; stroke-dasharray: 22 5; shape-rendering: crispEdges; }
.mark-o { stroke: #a85a1c; stroke-width: 1; shape-rendering: crispEdges; }
.mark-b { stroke: #0096ff; stroke-width: 1; shape-rendering: crispEdges; }
.fib { fill: none; stroke-width: 1; shape-rendering: crispEdges; }
.grey { stroke: #808080; }
.grey1 { stroke: #8a8a8a; }
.green { stroke: #1d7d1d; }
.purple { stroke: #9900cc; }
.pink { stroke: #ff0066; }
.tr-or { fill: none; stroke: #8f5320; stroke-width: 2; }
.tr-bl { fill: none; stroke: #125a90; stroke-width: 2; }
.tr-thin { fill: none; stroke: #1e78b8; stroke-width: 1; }
.trend { fill: none; stroke: #0000ff; stroke-width: 3; }
.arrow { fill: #0000ff; }
.zig { fill: none; stroke: #9900ff; stroke-width: 3; stroke-dasharray: 36 10; }

.nss path, .nss polyline { vector-effect: non-scaling-stroke; fill: none; }
.wick { stroke: #6c6c6c; stroke-width: 1; shape-rendering: crispEdges; }
.ol { stroke: #7a7a7a; stroke-width: 6; shape-rendering: crispEdges; }
.gr { stroke: #00f000; stroke-width: 4; shape-rendering: crispEdges; }
.rd { stroke: #ff0000; stroke-width: 4; shape-rendering: crispEdges; }
.doji { stroke: #7a7a7a; stroke-width: 5; shape-rendering: crispEdges; }
.bb { stroke: #0096ff; stroke-width: 1.2; fill: none; }
.basis { stroke: #ff6600; stroke-width: 1.2; fill: none; }
.ma { stroke: #f01010; stroke-width: 1.2; fill: none; }

.lbl { font-size: 26.4px; fill: #c4c4c4; letter-spacing: .75px; }
.lbl-wide { letter-spacing: .9px; }
.copy { font-size: 22.4px; fill: #a0a0a0; }
.lv { font-size: 26.4px; fill: #0096ff; text-anchor: end; }
.fl { font-size: 26.4px; letter-spacing: .4px; }
.mid { text-anchor: middle; }
.c-grey { fill: #777; }
.c-green { fill: #1d7d1d; }
.c-purple { fill: #9900ff; }
.c-pink { fill: #ff0066; }
.note { font-size: 28px; fill: #0096ff; letter-spacing: .75px; }
.ax { font-size: 26.4px; fill: #c4c4c4; }
.tagt { font-size: 26.4px; }
.t-w { fill: #fff; }
.t-k { fill: #000; }
.tag-grey { fill: #666; }
.tag-blue { fill: #0096ff; }
.tag-orange { fill: #ff6600; }
.tag-green { fill: #00ff00; }
.tag-red { fill: #ff0000; }
.date-box { fill: #666; }
.dyn { font-size: 26.4px; font-weight: 700; fill: #c8c8c8; }
.dyn-box { fill: #333; stroke: #aaa; stroke-width: 1; }
.dyn-fe { font-size: 11px; fill: #ddd; text-anchor: middle; }

/* cursor window (floats over the chart) */
.cursor { position: absolute; left: 51px; top: 21px; width: 456px; height: 1122px; background: rgba(23, 63, 109, .5); outline: 1px solid #2a4a60; font-size: 26.4px; }
.row { height: 34px; line-height: 34px; padding: 0 3px; display: flex; justify-content: space-between; white-space: nowrap; color: #cdcdcd; }
.row > span:first-child { letter-spacing: .5px; }
.hdr { justify-content: center; font-weight: 700; letter-spacing: .6px; }
.c-b { color: #0096ff; }
.c-o { color: #ff6600; }
.c-r { color: #ff0000; }
.c-p { color: #ff0066; }

/* indicator tabs */
.tabs { height: 49px; border-top: 2px solid #555; display: flex; padding-right: 158px; background: #000; }
.tab { position: relative; height: 47px; line-height: 46px; padding-left: 15px; font-size: 26.4px; letter-spacing: .8px; color: #c8c8c8; border-right: 1px solid #3a3a3a; border-bottom: 2px solid #666; white-space: nowrap; flex: none; }
.tab:nth-child(1) { width: 203px; }
.tab:nth-child(2) { width: 429px; }
.tab:nth-child(3) { width: 229px; }
.tab:nth-child(4) { width: 150px; }
.tab:nth-child(5) { width: 176px; }
.tab:nth-child(6) { width: 181px; }
.tab.active { background: #0d0d0d; border-bottom-color: transparent; }
.tab-x { position: absolute; right: 3px; top: -18px; font-size: 13px; color: #888; }
.tab-fill { flex: 1; border-bottom: 2px solid #666; border-right: 1px solid #6a6a6a; }
```
